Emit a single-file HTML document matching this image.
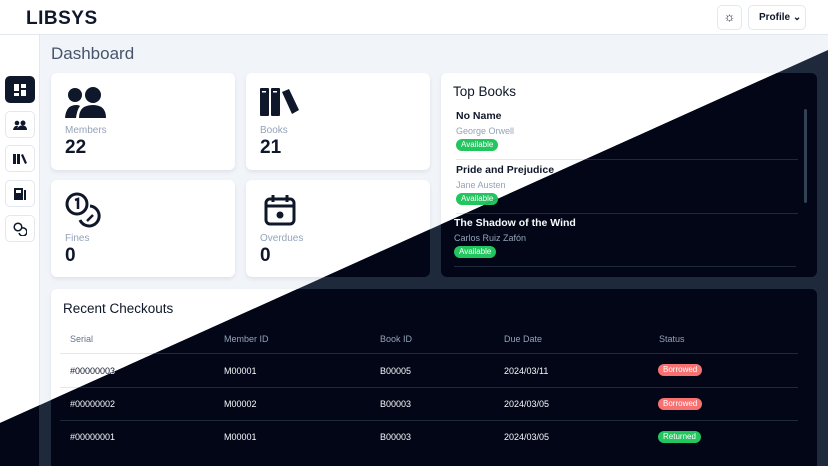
<!DOCTYPE html>
<html><head><meta charset="utf-8"><style>
*{margin:0;padding:0;box-sizing:border-box}
body{width:828px;height:466px;overflow:hidden;font-family:"Liberation Sans",sans-serif;position:relative}
.page{position:absolute;left:0;top:0;width:828px;height:466px;background:#f1f5f9;color:#0f172a;overflow:hidden}
.page.dark{background:#1e293b;color:#f8fafc;clip-path:polygon(828px 50px,828px 466px,0 466px,0 423px)}
.hdr{position:absolute;left:0;top:0;width:828px;height:35px;background:#fff;border-bottom:1px solid #e2e8f0}
.logo{position:absolute;left:26px;top:8px;font-weight:bold;font-size:19px;letter-spacing:0.5px}
.btn{position:absolute;border:1px solid #e2e8f0;border-radius:5px;background:#fff;font-size:10px;font-weight:bold}
.side{position:absolute;left:0;top:35px;width:40px;height:431px;background:#fff;border-right:1px solid #e2e8f0}
.sb{position:absolute;left:5px;width:30px;height:27px;border:1px solid #e2e8f0;border-radius:5px;background:#fff;display:flex;align-items:center;justify-content:center}
.sb.act{background:#0f172a;border-color:#0f172a}
.title{position:absolute;left:51px;top:44px;font-size:17px;color:#475569}
.card{position:absolute;background:#fff;border-radius:6px;box-shadow:0 2px 4px rgba(0,0,0,.08)}
.lbl{position:absolute;left:14px;font-size:10px;color:#94a3b8}
.num{position:absolute;left:14px;font-size:19px;font-weight:bold}
.bk{position:absolute;left:15px;width:342px;border-bottom:1px solid #e2e8f0;height:54px}
.bk b{position:absolute;left:0;top:4px;font-size:10.5px}
.bk i{position:absolute;left:0;top:20px;font-size:9px;color:#94a3b8;font-style:normal}
.pill{position:absolute;font-size:8px;color:#fff;background:#22c55e;border-radius:7px;padding:1px 5px;line-height:10px}
.th,.td{position:absolute;font-size:9px}
.th{color:#64748b}
.row{position:absolute;left:9px;width:738px;border-top:1px solid #e2e8f0}
.dark .hdr,.dark .side,.dark .sb,.dark .btn{background:#020617;border-color:#1e293b}
.dark .card{background:#020617;box-shadow:none}
.dark .title{color:#94a3b8}
.dark .bk,.dark .row{border-color:#1e293b}
.dark .sb.act{background:#f8fafc}
</style></head><body>

<!-- LIGHT -->
<div class="page">
<div class="hdr"><div class="logo">LIBSYS</div>
<div class="btn" style="left:717px;top:5px;width:25px;height:25px;text-align:center;line-height:22px;font-size:13px">☼</div>
<div class="btn" style="left:748px;top:5px;width:58px;height:25px;line-height:23px;padding-left:10px">Profile ⌄</div></div>
<div class="side">
<div class="sb act" style="top:41px"><svg width="12" height="12"><rect x="0" y="0" width="5" height="7" fill="#fff"/><rect x="7" y="0" width="5" height="4" fill="#fff"/><rect x="0" y="9" width="5" height="3" fill="#fff"/><rect x="7" y="6" width="5" height="6" fill="#fff"/></svg></div>
<div class="sb" style="top:76px"><svg width="14" height="10"><circle cx="4" cy="3" r="2.3" fill="#0f172a"/><circle cx="10" cy="3" r="2.5" fill="#0f172a"/><path d="M0 10 Q1 5 5 6 L4 10Z M4 10 Q5 5 10 5.5 Q14 6 14 10Z" fill="#0f172a"/></svg></div>
<div class="sb" style="top:110px"><svg width="14" height="10"><rect x="0" y="0" width="3" height="10" fill="#0f172a"/><rect x="4" y="0" width="3" height="10" fill="#0f172a"/><path d="M8 1 L10 0 L14 9 L12 10Z" fill="#0f172a"/></svg></div>
<div class="sb" style="top:145px"><svg width="12" height="12"><rect x="0" y="0" width="9" height="12" fill="#0f172a"/><rect x="10" y="2" width="2" height="10" fill="#0f172a"/><rect x="2" y="2" width="5" height="3" fill="#fff"/></svg></div>
<div class="sb" style="top:180px"><svg width="14" height="14" fill="none" stroke="#0f172a" stroke-width="1.5"><circle cx="5" cy="5" r="3.8"/><path d="M9 6 A4 4 0 1 1 6 11"/></svg></div>
</div>
<div class="title">Dashboard</div>
<div class="card" style="left:51px;top:73px;width:184px;height:97px">
<svg style="position:absolute;left:14px;top:14px" width="41" height="31"><circle cx="10" cy="8" r="7" fill="#0f172a"/><circle cx="28" cy="8" r="8" fill="#0f172a"/><path d="M0 31 Q1 18 11 18 Q14 18 15 19 Q12 23 11 31Z M14 31 Q14 18 28 18 Q41 18 41 31Z" fill="#0f172a"/></svg>
<div class="lbl" style="top:52px">Members</div><div class="num" style="top:64px">22</div></div>
<div class="card" style="left:246px;top:73px;width:184px;height:97px">
<svg style="position:absolute;left:14px;top:15px" width="40" height="28"><rect x="0" y="0" width="9" height="28" rx="1" fill="#0f172a"/><rect x="11" y="0" width="9" height="28" rx="1" fill="#0f172a"/><path d="M22 4 L29 1 L39 22 L32 26Z" fill="#0f172a"/><rect x="2" y="3" width="4" height="1.5" fill="#fff"/><rect x="13" y="3" width="4" height="1.5" fill="#fff"/></svg>
<div class="lbl" style="top:52px">Books</div><div class="num" style="top:64px">21</div></div>
<div class="card" style="left:51px;top:180px;width:184px;height:97px">
<svg style="position:absolute;left:14px;top:12px" width="42" height="36" fill="none" stroke="#0f172a" stroke-width="3"><circle cx="12" cy="12" r="10"/><path d="M10 8 L13 7 L13 17" stroke-width="2.5"/><path d="M25 14 A10 10 0 1 1 15 28"/><path d="M22 29 L28 23" stroke-width="2.5"/></svg>
<div class="lbl" style="top:53px">Fines</div><div class="num" style="top:65px">0</div></div>
<div class="card" style="left:246px;top:180px;width:184px;height:97px">
<svg style="position:absolute;left:18px;top:14px" width="32" height="32" fill="none" stroke="#0f172a" stroke-width="3"><rect x="2" y="5" width="28" height="25" rx="4"/><path d="M2 12 H30 M9 1 V8 M23 1 V8"/><circle cx="16" cy="21" r="2" fill="#0f172a"/></svg>
<div class="lbl" style="top:53px">Overdues</div><div class="num" style="top:65px">0</div></div>
<div class="card" style="left:441px;top:73px;width:376px;height:204px">
<div style="position:absolute;left:12px;top:11px;font-size:13.5px">Top Books</div>
<div style="position:absolute;right:10px;top:36px;width:3px;height:94px;background:#cbd5e1;border-radius:2px"></div>
<div class="bk" style="top:33px"><b>No Name</b><i>George Orwell</i><span class="pill" style="top:33px">Available</span></div>
<div class="bk" style="top:87px"><b>Pride and Prejudice</b><i>Jane Austen</i><span class="pill" style="top:33px">Available</span></div>
<div class="bk" style="top:140px;left:13px"><b>The Shadow of the Wind</b><i>Carlos Ruiz Zafón</i><span class="pill" style="top:33px">Available</span></div>
</div>
<div class="card" style="left:51px;top:289px;width:766px;height:190px">
<div style="position:absolute;left:12px;top:12px;font-size:13.5px">Recent Checkouts</div>
<div class="th" style="left:19px;top:45px">Serial</div><div class="th" style="left:173px;top:45px">Member ID</div><div class="th" style="left:329px;top:45px">Book ID</div><div class="th" style="left:453px;top:45px">Due Date</div><div class="th" style="left:608px;top:45px">Status</div>
<div class="row" style="top:64px"></div><div class="row" style="top:98px"></div><div class="row" style="top:131px"></div>
<div class="td" style="left:19px;top:77px">#00000003</div><div class="td" style="left:173px;top:77px">M00001</div><div class="td" style="left:329px;top:77px">B00005</div><div class="td" style="left:453px;top:77px">2024/03/11</div><span class="pill" style="left:607px;top:75px;background:#f87171">Borrowed</span>
<div class="td" style="left:19px;top:110px">#00000002</div><div class="td" style="left:173px;top:110px">M00002</div><div class="td" style="left:329px;top:110px">B00003</div><div class="td" style="left:453px;top:110px">2024/03/05</div><span class="pill" style="left:607px;top:109px;background:#f87171">Borrowed</span>
<div class="td" style="left:19px;top:143px">#00000001</div><div class="td" style="left:173px;top:143px">M00001</div><div class="td" style="left:329px;top:143px">B00003</div><div class="td" style="left:453px;top:143px">2024/03/05</div><span class="pill" style="left:607px;top:142px">Returned</span>
</div>
</div>

<!-- DARK -->
<div class="page dark">
<div class="hdr"></div>
<div class="side"></div>
<div class="title">Dashboard</div>
<div class="card" style="left:51px;top:73px;width:184px;height:97px"></div>
<div class="card" style="left:246px;top:73px;width:184px;height:97px"></div>
<div class="card" style="left:51px;top:180px;width:184px;height:97px"></div>
<div class="card" style="left:246px;top:180px;width:184px;height:97px"></div>
<div class="card" style="left:441px;top:73px;width:376px;height:204px">
<div style="position:absolute;left:12px;top:11px;font-size:13.5px">Top Books</div>
<div style="position:absolute;right:10px;top:36px;width:3px;height:94px;background:#334155;border-radius:2px"></div>
<div class="bk" style="top:33px"><b>No Name</b><i>George Orwell</i><span class="pill" style="top:33px">Available</span></div>
<div class="bk" style="top:87px"><b>Pride and Prejudice</b><i>Jane Austen</i><span class="pill" style="top:33px">Available</span></div>
<div class="bk" style="top:140px;left:13px"><b>The Shadow of the Wind</b><i>Carlos Ruiz Zafón</i><span class="pill" style="top:33px">Available</span></div>
</div>
<div class="card" style="left:51px;top:289px;width:766px;height:190px">
<div style="position:absolute;left:12px;top:12px;font-size:13.5px">Recent Checkouts</div>
<div class="th" style="left:19px;top:45px;color:#94a3b8">Serial</div><div class="th" style="left:173px;top:45px;color:#94a3b8">Member ID</div><div class="th" style="left:329px;top:45px;color:#94a3b8">Book ID</div><div class="th" style="left:453px;top:45px;color:#94a3b8">Due Date</div><div class="th" style="left:608px;top:45px;color:#94a3b8">Status</div>
<div class="row" style="top:64px"></div><div class="row" style="top:98px"></div><div class="row" style="top:131px"></div>
<div class="td" style="left:19px;top:77px">#00000003</div><div class="td" style="left:173px;top:77px">M00001</div><div class="td" style="left:329px;top:77px">B00005</div><div class="td" style="left:453px;top:77px">2024/03/11</div><span class="pill" style="left:607px;top:75px;background:#f87171">Borrowed</span>
<div class="td" style="left:19px;top:110px">#00000002</div><div class="td" style="left:173px;top:110px">M00002</div><div class="td" style="left:329px;top:110px">B00003</div><div class="td" style="left:453px;top:110px">2024/03/05</div><span class="pill" style="left:607px;top:109px;background:#f87171">Borrowed</span>
<div class="td" style="left:19px;top:143px">#00000001</div><div class="td" style="left:173px;top:143px">M00001</div><div class="td" style="left:329px;top:143px">B00003</div><div class="td" style="left:453px;top:143px">2024/03/05</div><span class="pill" style="left:607px;top:142px">Returned</span>
</div>
</div>
</body></html>
